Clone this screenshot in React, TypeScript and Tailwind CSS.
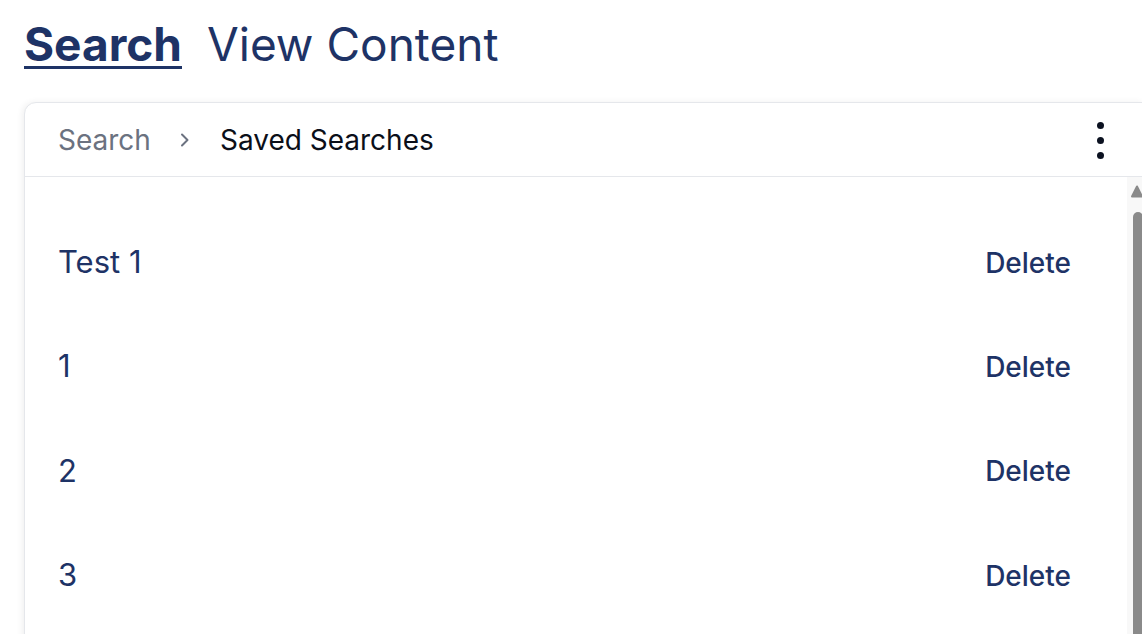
import React from "react";

const rows = ["Test 1", "1", "2", "3"];

export default function App() {
  return (
    <div
      className="h-[634px] w-[1142px] overflow-hidden bg-white"
      style={{ fontFamily: "Inter, 'Noto Sans', sans-serif" }}
    >
      <div className="pl-[24px] pt-[16px]">
        <div className="flex items-center gap-[25px] text-[46px] leading-[56px] text-[#1e3366]">
          <span className="font-bold underline decoration-[3px] underline-offset-[5px]">Search</span>
          <span className="font-normal">View Content</span>
        </div>
        <div className="mt-[30px] w-[1120px] rounded-[12px] rounded-tr-none border border-[#e5e7eb] bg-white shadow-[-2px_0_6px_rgba(0,0,0,0.06)]">
          <div className="flex h-[74px] items-center border-b border-[#e5e7eb] pl-[33px] pr-[39px]">
            <span className="text-[28px] text-[#6b7280]">Search</span>
            <svg
              className="ml-[28px] mr-[29px]"
              width="12"
              height="16"
              viewBox="0 0 12 16"
              fill="none"
              stroke="#6b7280"
              strokeWidth="2"
              strokeLinecap="round"
              strokeLinejoin="round"
            >
              <path d="M3 2.5 L8.5 8 L3 13.5" />
            </svg>
            <span className="text-[28px] text-[#0b0f19]">Saved Searches</span>
            <div className="ml-auto flex flex-col items-center gap-[8px] pt-[1px]">
              <span className="h-[7px] w-[7px] rounded-full bg-[#0b1120]" />
              <span className="h-[7px] w-[7px] rounded-full bg-[#0b1120]" />
              <span className="h-[7px] w-[7px] rounded-full bg-[#0b1120]" />
            </div>
          </div>
          <div className="flex h-[520px]">
            <div className="flex-1 pt-[33px] pl-[33px] pr-[56px]">
              {rows.map((r) => (
                <div key={r} className="flex h-[104.33px] items-center justify-between">
                  <span className="text-[31px] text-[#1e3366]">{r}</span>
                  <span className="pt-[1px] text-[28px] font-medium text-[#1e3366]">Delete</span>
                </div>
              ))}
            </div>
            <div className="flex w-[16px] flex-col bg-[#f8f8f8] pt-[8px] pl-[4px]">
              <svg width="12" height="13" viewBox="0 0 12 13">
                <path d="M6 1.5 L11 11.5 L1 11.5 Z" fill="#8a8a8a" stroke="#8a8a8a" strokeWidth="2" strokeLinejoin="round" />
              </svg>
              <div className="ml-[2px] mt-[14px] w-[10px] flex-1 rounded-t-[6px] bg-[#8a8a8a]" />
            </div>
          </div>
        </div>
      </div>
    </div>
  );
}
